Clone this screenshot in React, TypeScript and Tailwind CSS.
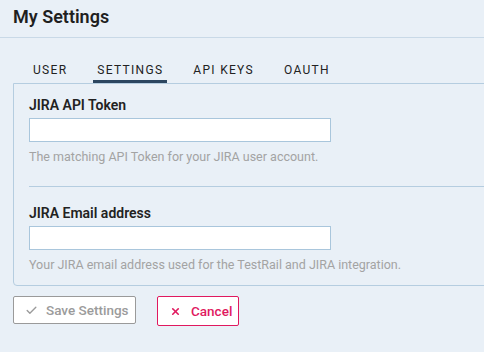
import { Check, X } from "lucide-react";

const tabs = ["USER", "SETTINGS", "API KEYS", "OAUTH"];

function Field({ label, help }: { label: string; help: string }) {
  return (
    <div className="pl-[15px]">
      <label className="block text-[14px] font-semibold leading-[18px] text-[#222]">
        {label}
      </label>
      <input
        type="text"
        className="mt-[4px] block h-[24px] w-[302px] border border-[#a9c6dc] bg-white px-2 text-[13px] outline-none"
      />
      <p className="mt-[7px] text-[12.5px] leading-[16px] text-[#a3a3a3]">{help}</p>
    </div>
  );
}

export default function App() {
  return (
    <div
      className="h-[352px] w-full overflow-hidden bg-[#e9f0f7]"
      style={{ fontFamily: "Roboto, 'Liberation Sans', sans-serif" }}
    >
      <div className="h-[38px] border-b border-[#c9d9e7] px-[13px] pt-[5px]">
        <h1 className="text-[18px] font-semibold leading-[24px] text-[#1f1f1f]">My Settings</h1>
      </div>

      <div className="flex gap-[22px] pl-[29px] pt-[22px]">
        {tabs.map((t) => (
          <div
            key={t}
            className={`px-1 text-[12px] font-normal leading-[20px] tracking-[1.3px] text-[#222] ${
              t === "SETTINGS" ? "border-b-[3px] border-[#2c4660]" : "border-b-[3px] border-transparent"
            }`}
          >
            {t}
          </div>
        ))}
      </div>

      <div className="-mr-4 ml-[13px] rounded-bl-[4px] border border-[#b5cde0] pb-[12px] pt-[12px]">
        <Field label="JIRA API Token" help="The matching API Token for your JIRA user account." />
        <div className="ml-[15px] mt-[21px] mb-[17px] border-t border-[#b5cde0]" />
        <Field
          label="JIRA Email address"
          help="Your JIRA email address used for the TestRail and JIRA integration."
        />
      </div>

      <div className="ml-[13px] mt-[10px] flex items-start gap-[21px]">
        <button className="flex h-[28px] w-[123px] items-center gap-[8px] rounded-[2px] border border-[#9a9a9a] bg-white pl-[11px] text-[13.5px] font-medium text-[#9b9b9b]">
          <Check size={13} strokeWidth={2.5} />
          Save Settings
        </button>
        <button className="flex h-[30px] w-[82px] items-center gap-[10px] rounded-[2px] border border-[#e0195f] bg-white pl-[12px] text-[13.5px] font-medium text-[#e0195f]">
          <X size={11} strokeWidth={3.5} />
          Cancel
        </button>
      </div>
    </div>
  );
}
